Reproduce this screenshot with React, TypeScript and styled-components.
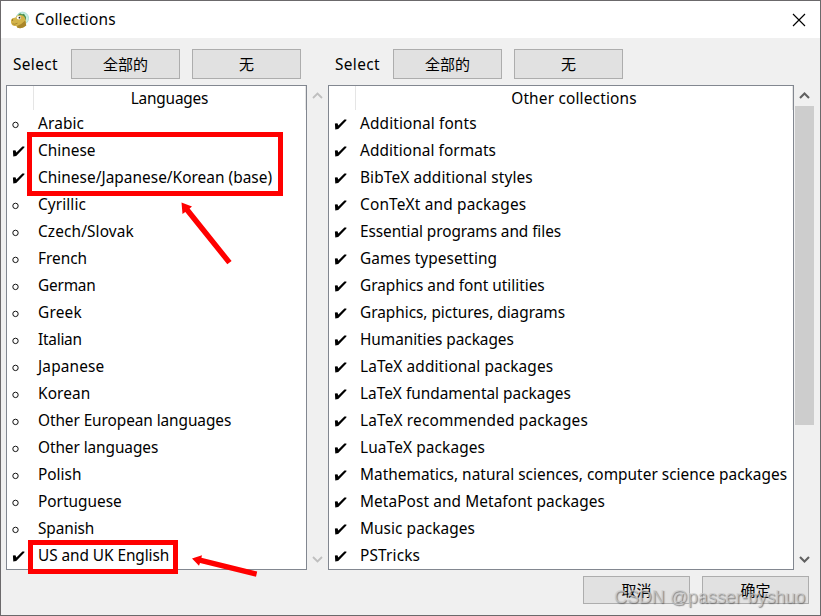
import React from 'react';
import styled, { createGlobalStyle } from 'styled-components';

const Global = createGlobalStyle`
  * { box-sizing: border-box; }
  body { margin: 0; overflow: hidden; }
`;

const Window = styled.div`
  position: relative;
  width: 821px;
  height: 616px;
  display: flex;
  flex-direction: column;
  background: #f0f0f0;
  border: 1px solid #6b696b;
  color: #000;
  font: 15.4px/27px 'Noto Sans', 'Noto Sans CJK SC', sans-serif;
  white-space: nowrap;
`;

const TitleBar = styled.header`
  height: 37px;
  display: flex;
  align-items: center;
  padding: 0 14px 0 9px;
  background: #fff;
`;

const Title = styled.h1`
  flex: 1;
  margin: 0 0 0 6px;
  font-size: 15.4px;
  font-weight: 400;
  letter-spacing: 0.18px;
`;

const CloseButton = styled.button`
  display: flex;
  padding: 0;
  border: 0;
  background: none;
`;

const Columns = styled.main`
  display: flex;
  padding: 11px 0 0 5px;
`;

const Collection = styled.section<{ $width: number }>`
  width: ${(p) => p.$width}px;
`;

const Toolbar = styled.div`
  display: flex;
  align-items: center;
  height: 30px;
  gap: 12px;
  margin-bottom: 6px;
  padding-left: 7px;
`;

const SelectLabel = styled.span`
  width: 46px;
  letter-spacing: 0.35px;
`;

const Button = styled.button<{ $compact?: boolean }>`
  width: ${(p) => (p.$compact ? 107 : 109)}px;
  height: ${(p) => (p.$compact ? 28 : 30)}px;
  padding: 0;
  background: #e1e1e1;
  border: 1px solid #adadad;
  color: #000;
  font: 15px/26px 'Noto Sans CJK SC', sans-serif;
`;

const ListArea = styled.div`
  display: flex;
`;

const List = styled.div`
  flex: 1;
  height: 485px;
  background: #fff;
  border: 1px solid #828790;
`;

const ListHeader = styled.div`
  display: flex;
  height: 24px;
  line-height: 26px;
  border-right: 1px solid #e5e5e5;
`;

const HeaderMark = styled.div`
  width: 27px;
  border-right: 1px solid #e5e5e5;
`;

const HeaderText = styled.div<{ $track: number }>`
  flex: 1;
  text-align: center;
  letter-spacing: ${(p) => p.$track}px;
`;

const Row = styled.div`
  display: flex;
  align-items: center;
  height: 27px;
`;

const Mark = styled.span`
  width: 31px;
  display: flex;
  padding-left: 4px;
`;

const Name = styled.span<{ $track: number }>`
  letter-spacing: ${(p) => p.$track}px;
`;

const Scrollbar = styled.div`
  width: 21px;
  height: 485px;
  display: flex;
  flex-direction: column;
  align-items: center;
`;

const ScrollArrow = styled.div`
  height: 21px;
  display: flex;
  align-items: center;
`;

const ScrollTrack = styled.div`
  flex: 1;
`;

const ScrollThumb = styled.div`
  width: 19px;
  height: 319px;
  background: #cdcdcd;
`;

const Footer = styled.footer`
  display: flex;
  justify-content: flex-end;
  gap: 12px;
  padding: 6px 11px 0 0;
`;

const Highlight = styled.div<{ $x: number; $y: number; $w: number; $h: number }>`
  position: absolute;
  left: ${(p) => p.$x}px;
  top: ${(p) => p.$y}px;
  width: ${(p) => p.$w}px;
  height: ${(p) => p.$h}px;
  border: 5px solid #f00;
`;

const Pointer = styled.svg<{ $x: number; $y: number }>`
  position: absolute;
  left: ${(p) => p.$x}px;
  top: ${(p) => p.$y}px;
  fill: #f00;
`;

const Watermark = styled.div`
  position: absolute;
  left: 613px;
  top: 585px;
  color: rgba(205, 205, 205, 0.72);
  font: 17.9px/22px 'Liberation Sans', sans-serif;
  text-shadow: 1px 1px 1px rgba(90, 90, 90, 0.7);
`;

const Check = () => (
  <svg width="16" height="14" viewBox="0 0 16 14">
    <path d="M1.9 6.5 L4.4 6.3 L5.4 8.4 L11.4 2.4 L13.4 2.4 L13.4 3.6 L5.2 12 L2.3 12.4 Z" fill="#000" />
  </svg>
);

const Circle = () => (
  <svg width="16" height="14" viewBox="0 0 16 14">
    <circle cx="4.5" cy="7.9" r="2.7" fill="none" stroke="#111" strokeWidth="1" />
  </svg>
);

const Chevron = ({ down, disabled }: { down?: boolean; disabled?: boolean }) => (
  <svg width="11" height="9" viewBox="0 0 11 9">
    <path
      d={down ? 'M1 2 L5.5 6.5 L10 2' : 'M1 7 L5.5 2.5 L10 7'}
      fill="none"
      stroke={disabled ? '#bfbfbf' : '#606060'}
      strokeWidth={disabled ? 1.8 : 2.1}
    />
  </svg>
);

const Mascot = () => (
  <svg width="19" height="18" viewBox="0 0 19 18">
    <circle cx="12.4" cy="7.3" r="6.2" fill="#c9eee2" stroke="#9bd6cb" strokeWidth=".7" />
    <path d="M8 4 L10 2.2 L12 3.2 L14 2.7 L16 6 L16 9 L9 6Z" fill="#4d9150" />
    <path d="M1 9 Q2.3 6.3 5.2 6.7 Q6.8 3.3 10.7 4 Q15 4.5 15.6 9 L16.2 14.5 Q12 18.2 7.5 16.7 L6.2 15 Q1.4 15 1 11.4Z" fill="#d4b44a" />
    <path d="M7 15 Q11.5 13.5 15.2 9.5 L16.2 14.5 Q12 18.2 7.5 16.7Z" fill="#a9862a" />
    <ellipse cx="8.8" cy="6.7" rx="2.2" ry="1.8" fill="#fff" />
    <circle cx="9.5" cy="6.7" r=".9" fill="#222" />
    <circle cx="2.5" cy="9" r=".7" fill="#7d6220" />
    <path d="M2.3 12.8 Q4.5 14 7.5 12.2" fill="none" stroke="#957525" strokeWidth=".7" />
  </svg>
);

type Item = { name: string; checked?: boolean; track?: number };

const languages: Item[] = [
  { name: 'Arabic', track: 0.13 },
  { name: 'Chinese', checked: true },
  { name: 'Chinese/Japanese/Korean (base)', checked: true, track: 0.03 },
  { name: 'Cyrillic', track: 0.1 },
  { name: 'Czech/Slovak', track: 0.12 },
  { name: 'French' },
  { name: 'German', track: -0.2 },
  { name: 'Greek', track: 0.2 },
  { name: 'Italian', track: -0.25 },
  { name: 'Japanese', track: 0.15 },
  { name: 'Korean', track: 0.1 },
  { name: 'Other European languages', track: -0.08 },
  { name: 'Other languages', track: -0.08 },
  { name: 'Polish' },
  { name: 'Portuguese' },
  { name: 'Spanish', track: -0.1 },
  { name: 'US and UK English', checked: true, track: -0.07 },
];

const others: Item[] = [
  { name: 'Additional fonts', track: 0.12 },
  { name: 'Additional formats', track: 0.08 },
  { name: 'BibTeX additional styles', track: 0.12 },
  { name: 'ConTeXt and packages', track: 0.18 },
  { name: 'Essential programs and files', track: -0.08 },
  { name: 'Games typesetting', track: 0.07 },
  { name: 'Graphics and font utilities', track: -0.03 },
  { name: 'Graphics, pictures, diagrams', track: -0.03 },
  { name: 'Humanities packages', track: -0.06 },
  { name: 'LaTeX additional packages', track: 0.12 },
  { name: 'LaTeX fundamental packages' },
  { name: 'LaTeX recommended packages', track: 0.16 },
  { name: 'LuaTeX packages', track: 0.12 },
  { name: 'Mathematics, natural sciences, computer science packages', track: 0.025 },
  { name: 'MetaPost and Metafont packages', track: 0.09 },
  { name: 'Music packages', track: 0.07 },
  { name: 'PSTricks', track: 0.15 },
].map((item) => ({ ...item, checked: true }));

type PanelProps = { title: string; titleTrack: number; items: Item[]; width: number; scrollable?: boolean };

const Panel = ({ title, titleTrack, items, width, scrollable }: PanelProps) => (
  <Collection $width={width}>
    <Toolbar>
      <SelectLabel>Select</SelectLabel>
      <Button>全部的</Button>
      <Button>无</Button>
    </Toolbar>
    <ListArea>
      <List>
        <ListHeader>
          <HeaderMark />
          <HeaderText $track={titleTrack}>{title}</HeaderText>
        </ListHeader>
        {items.map((item) => (
          <Row key={item.name}>
            <Mark>{item.checked ? <Check /> : <Circle />}</Mark>
            <Name $track={item.track ?? 0}>{item.name}</Name>
          </Row>
        ))}
      </List>
      <Scrollbar>
        <ScrollArrow><Chevron disabled={!scrollable} /></ScrollArrow>
        <ScrollTrack>{scrollable && <ScrollThumb />}</ScrollTrack>
        <ScrollArrow><Chevron down disabled={!scrollable} /></ScrollArrow>
      </Scrollbar>
    </ListArea>
  </Collection>
);

export default function App() {
  return (
    <>
      <Global />
      <Window>
        <TitleBar>
          <Mascot />
          <Title>Collections</Title>
          <CloseButton aria-label="Close">
            <svg width="14" height="14" viewBox="0 0 14 14">
              <path d="M1 1 L13 13 M13 1 L1 13" stroke="#000" strokeWidth="1.15" />
            </svg>
          </CloseButton>
        </TitleBar>
        <Columns>
          <Panel title="Languages" titleTrack={-0.2} items={languages} width={322} />
          <Panel title="Other collections" titleTrack={0.18} items={others} width={487} scrollable />
        </Columns>
        <Footer>
          <Button $compact>取消</Button>
          <Button $compact>确定</Button>
        </Footer>
        <Highlight $x={26} $y={131} $w={256} $h={64} />
        <Highlight $x={27} $y={539} $w={150} $h={34} />
        <Pointer $x={179} $y={200} width="54" height="64">
          <path d="M1.5 1.5 L12 5.5 L9.6 7.6 L51.6 60 L47.3 63.2 L5.3 11 L2.5 13Z" />
        </Pointer>
        <Pointer $x={190} $y={554} width="68" height="24">
          <path d="M1 3.4 L11 .2 L10.4 2.8 L66.2 16.6 L65 21.7 L9 7.9 L8 10.8Z" />
        </Pointer>
        <Watermark>CSDN @passer-byshuo</Watermark>
      </Window>
    </>
  );
}
